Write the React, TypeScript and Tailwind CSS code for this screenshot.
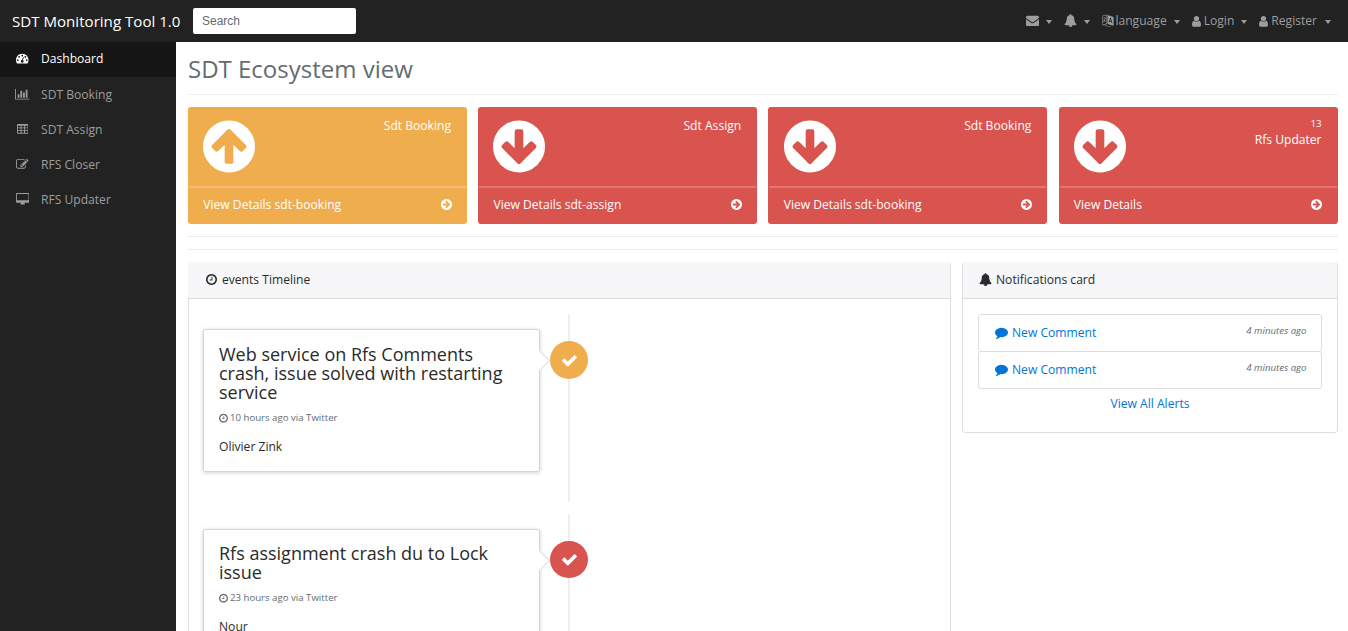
import React from "react";

const ICONS = {
  envelope: { w: 1792, d: "M1792 710v794q0 66-47 113t-113 47h-1472q-66 0-113-47t-47-113v-794q44 49 101 87 362 246 497 345 57 42 92.5 65.5t94.5 48 110 24.5h2q51 0 110-24.5t94.5-48 92.5-65.5q170-123 498-345 57-39 100-87zm0-294q0 79-49 151t-122 123q-376 261-468 325-10 7-42.5 31t-54 38.5-52 32.5-57.5 27-50 9h-2q-23 0-50-9t-57.5-27-52-32.5-54-38.5-42.5-31q-91-64-262-182.5t-205-142.5q-62-42-117-115.5t-55-136.5q0-78 41.5-130t118.5-52h1472q65 0 112.5 47t47.5 113z" },
  bell: { w: 1792, d: "M912 1696q0-16-16-16-59 0-101.5-42.5t-42.5-101.5q0-16-16-16t-16 16q0 73 51.5 124.5t124.5 51.5q16 0 16-16zm816-288q0 52-38 90t-90 38h-448q0 106-75 181t-181 75-181-75-75-181h-448q-52 0-90-38t-38-90q50-42 91-88t85-119.5 74.5-158.5 50-206 19.5-260q0-152 117-282.5t307-158.5q-8-19-8-39 0-40 28-68t68-28 68 28 28 68q0 20-8 39 190 28 307 158.5t117 282.5q0 139 19.5 260t50 206 74.5 158.5 85 119.5 91 88z" },
  user: { w: 1280, x: 256, d: "M1536 1399q0 109-62.5 187t-150.5 78h-854q-88 0-150.5-78t-62.5-187q0-85 8.5-160.5t31.5-152 58.5-131 94-89 134.5-34.5q131 128 313 128t313-128q76 0 134.5 34.5t94 89 58.5 131 31.5 152 8.5 160.5zm-256-887q0 159-112.5 271.5t-271.5 112.5-271.5-112.5-112.5-271.5 112.5-271.5 271.5-112.5 271.5 112.5 112.5 271.5z" },
  gauge: { w: 1792, d: "M384 1152q0-53-37.5-90.5t-90.5-37.5-90.5 37.5-37.5 90.5 37.5 90.5 90.5 37.5 90.5-37.5 37.5-90.5zm192-448q0-53-37.5-90.5t-90.5-37.5-90.5 37.5-37.5 90.5 37.5 90.5 90.5 37.5 90.5-37.5 37.5-90.5zm428 481l101-382q6-26-7.5-48.5t-38.5-29.5-48 6.5-30 39.5l-101 382q-60 5-107 43.5t-63 98.5q-20 77 20 146t117 89 146-20 89-117q16-60-6-117t-72-91zm660-33q0-53-37.5-90.5t-90.5-37.5-90.5 37.5-37.5 90.5 37.5 90.5 90.5 37.5 90.5-37.5 37.5-90.5zm-640-640q0-53-37.5-90.5t-90.5-37.5-90.5 37.5-37.5 90.5 37.5 90.5 90.5 37.5 90.5-37.5 37.5-90.5zm448 192q0-53-37.5-90.5t-90.5-37.5-90.5 37.5-37.5 90.5 37.5 90.5 90.5 37.5 90.5-37.5 37.5-90.5zm320 448q0 261-141 483-19 29-54 29h-1402q-35 0-54-29-141-221-141-483 0-182 71-348t191-286 286-191 348-71 348 71 286 191 191 286 71 348z" },
  chart: { w: 2048, d: "M640 896v512h-256v-512h256zm384-512v1024h-256v-1024h256zm1024 1152v128h-2048v-1536h128v1408h1920zm-640-896v768h-256v-768h256zm384-384v1152h-256v-1152h256z" },
  table: { w: 1664, x: 64, d: "M224 128h1344q66 0 113 47t47 113v1088q0 66-47 113t-113 47h-1344q-66 0-113-47t-47-113v-1088q0-66 47-113t113-47zM192 416v192q0 32 32 32h320q32 0 32-32v-192q0-32-32-32h-320q-32 0-32 32zM704 416v192q0 32 32 32h320q32 0 32-32v-192q0-32-32-32h-320q-32 0-32 32zM1216 416v192q0 32 32 32h320q32 0 32-32v-192q0-32-32-32h-320q-32 0-32 32zM192 800v192q0 32 32 32h320q32 0 32-32v-192q0-32-32-32h-320q-32 0-32 32zM704 800v192q0 32 32 32h320q32 0 32-32v-192q0-32-32-32h-320q-32 0-32 32zM1216 800v192q0 32 32 32h320q32 0 32-32v-192q0-32-32-32h-320q-32 0-32 32zM192 1184v192q0 32 32 32h320q32 0 32-32v-192q0-32-32-32h-320q-32 0-32 32zM704 1184v192q0 32 32 32h320q32 0 32-32v-192q0-32-32-32h-320q-32 0-32 32zM1216 1184v192q0 32 32 32h320q32 0 32-32v-192q0-32-32-32h-320q-32 0-32 32z" },
  edit: { w: 1792, d: "M888 1184l116-116-152-152-116 116v56h96v96h56zm440-720q-16-16-33 1l-350 350q-17 17-1 33t33-1l350-350q17-17 1-33zm80 594v190q0 119-84.5 203.5t-203.5 84.5h-832q-119 0-203.5-84.5t-84.5-203.5v-832q0-119 84.5-203.5t203.5-84.5h832q63 0 117 25 15 7 18 23 3 17-9 29l-49 49q-14 14-32 8-23-6-45-6h-832q-66 0-113 47t-47 113v832q0 66 47 113t113 47h832q66 0 113-47t47-113v-126q0-13 9-22l64-64q15-15 35-7t20 29zm-96-738l288 288-672 672h-288v-288zm444 132l-92 92-288-288 92-92q28-28 68-28t68 28l152 152q28 28 28 68t-28 68z" },
  desktop: { w: 1920, d: "M1792 992v-832q0-13-9.500-22.500t-22.500-9.500h-1600q-13 0-22.500 9.500t-9.500 22.500v832q0 13 9.500 22.500t22.500 9.500h1600q13 0 22.500-9.500t9.500-22.500zm128-832v1088q0 66-47 113t-113 47h-544q0 37 16 77.500t32 71 16 43.500q0 26-19 45t-45 19h-512q-26 0-45-19t-19-45q0-14 16-44t32-70 16-78h-544q-66 0-113-47t-47-113v-1088q0-66 47-113t113-47h1600q66 0 113 47t47 113z" },
  circleUp: { w: 1536, x: 128, d: "M1412 895q0-27-18-45l-362-362-91-91q-18-18-45-18t-45 18l-91 91-362 362q-18 18-18 45t18 45l91 91q18 18 45 18t45-18l189-189v502q0 26 19 45t45 19h128q26 0 45-19t19-45v-502l189 189q19 19 45 19t45-19l91-91q18-18 18-45zm252 1q0 209-103 385.5t-279.5 279.5-385.5 103-385.5-103-279.5-279.5-103-385.5 103-385.5 279.5-279.5 385.5-103 385.5 103 279.5 279.5 103 385.5z" },
  clock: { w: 1536, x: 128, d: "M1024 544v448q0 14-9 23t-23 9h-320q-14 0-23-9t-9-23v-64q0-14 9-23t23-9h224v-352q0-14 9-23t23-9h64q14 0 23 9t9 23zm416 352q0-148-73-273t-198-198-273-73-273 73-198 198-73 273 73 273 198 198 273 73 273-73 198-198 73-273zm224 0q0 209-103 385.5t-279.5 279.5-385.5 103-385.5-103-279.5-279.5-103-385.5 103-385.5 279.5-279.5 385.5-103 385.5 103 279.5 279.5 103 385.5z" },
  check: { w: 1792, d: "M1671 566q0 40-28 68l-724 724-136 136q-28 28-68 28t-68-28l-136-136-362-362q-28-28-28-68t28-68l136-136q28-28 68-28t68 28l294 295 656-657q28-28 68-28t68 28l136 136q28 28 28 68z" },
  comment: { w: 1792, d: "M1792 896q0 174-120 321.5t-326 233-450 85.5q-70 0-145-8-198 175-460 242-49 14-114 22-17 2-30.5-9t-17.5-29v-1q-3-4-.5-12t2-10 4.5-9.5l6-9 7-8.500 8-9q7-8 31-34.500t34.500-38 31-39.500 32.500-51 27-59 26-76q-157-89-247.500-220t-90.500-281q0-174 120-321.500t326-233 450-85.500 450 85.500 326 233 120 321.500z" },
  language: { w: 1536, d: "M0 240l640-176v1300l-640 210zM80 300v1160l480-155v-1140zM290 400h70v100h140v80h-60q-20 200-110 330 60 80 140 120l-40 80q-90-50-150-130-70 80-160 130l-50-70q90-50 160-130-60-90-80-200h80q20 80 50 130 60-100 80-260h-250v-80h180zM700 140l836 270v1200l-836-246zM1060 500l-190 620 110 34 36-130 200 62 40 150 110 34-190-710zM1100 640l76 320-130-40zM400 1560l600 160 100-60-20 132-780-170z" },
};

type IconProps = { name: keyof typeof ICONS; className?: string };

function Icon({ name, className = "" }: IconProps) {
  const icon: { w: number; x?: number; d: string } = ICONS[name];
  return (
    <svg viewBox={`${icon.x ?? 0} 0 ${icon.w} 1792`} className={`inline-block shrink-0 ${className}`} fill="currentColor" fillRule="evenodd" aria-hidden="true">
      <path d={icon.d} />
    </svg>
  );
}

function Caret() {
  return <span className="mt-[2px] ml-[7px] inline-block h-0 w-0 border-x-[3px] border-t-[4px] border-x-transparent border-t-current" />;
}

const NAV: { icon: keyof typeof ICONS; label: string; active?: boolean }[] = [
  { icon: "gauge", label: "Dashboard", active: true },
  { icon: "chart", label: "SDT Booking" },
  { icon: "table", label: "SDT Assign" },
  { icon: "edit", label: "RFS Closer" },
  { icon: "desktop", label: "RFS Updater" },
];

const STATUS = [
  { title: "Sdt Booking", link: "View Details sdt-booking", up: true },
  { title: "Sdt Assign", link: "View Details sdt-assign" },
  { title: "Sdt Booking", link: "View Details sdt-booking" },
  { title: "Rfs Updater", link: "View Details", count: 13 },
];

function StatusCard({ title, link, up, count }: { title: string; link: string; up?: boolean; count?: number }) {
  return (
    <div className={`h-[117px] rounded-[3px] text-white ${up ? "bg-[#f0ad4e]" : "bg-[#d9534f]"}`}>
      <div className="flex h-[79px] justify-between pt-[9px] pr-[15px] pl-[15.3px]">
        <Icon name="circleUp" className={`h-[61px] w-[52px] ${up ? "" : "rotate-180"}`} />
        <div className="pr-px text-right leading-[20px]">
          {count !== undefined && <div className="-mb-px text-[9.7px] leading-[15px]">{count}</div>}
          <div>{title}</div>
        </div>
      </div>
      <div className="mx-px flex h-[38px] items-center justify-between border-t-2 border-white/20 px-[14.3px] pb-[2px]">
        <span>{link}</span>
        <Icon name="circleUp" className="mb-px h-[13px] w-[11px] rotate-90" />
      </div>
    </div>
  );
}

function TimelineItem({ title, time, author, danger }: { title: string; time: string; author: string; danger?: boolean }) {
  return (
    <li className="relative flex h-[188px]">
      <div className="absolute top-0 left-[365px] h-full w-[2px] bg-[#eeeeee]" />
      <div className={`relative mt-[15px] h-fit w-[337px] rounded-[2px] border border-[#d4d4d4] px-[15px] pb-[14px] shadow-[0_1px_4px_rgba(0,0,0,0.175)] ${danger ? "pt-[14px]" : "pt-[15px]"}`}>
        <div className="absolute top-[23px] -right-[8px] h-[15px] w-[15px] rotate-45 border-t border-r border-[#dcdcdc] bg-white" />
        <h4 className="text-[18px] leading-[19px] font-normal">{title}</h4>
        <p className="mt-[7px] flex h-[19px] items-center text-[9.65px] text-[#636c72]">
          <Icon name="clock" className="mr-[2px] mb-px h-[10.4px] w-[9px]" />
          {time}
        </p>
        <p className="mt-[9px] leading-[19.5px]">{author}</p>
      </div>
      <div className={`absolute top-[27px] left-[347px] flex w-[38px] items-center justify-center rounded-full text-white ${danger ? "h-[37px] bg-[#d9534f]" : "h-[38px] bg-[#f0ad4e]"}`}>
        <Icon name="check" className="h-[17px] w-[17px]" />
      </div>
    </li>
  );
}

export default function App() {
  return (
    <div className="flex h-[631px] w-[1348px] flex-col overflow-hidden bg-white font-['Open_Sans',sans-serif] text-[12.1px] text-[#292b2c]">
      <header className="flex h-[42px] shrink-0 items-center bg-[#222222] pl-[12px]">
        <span className="w-[181px] text-[15.1px] text-white">SDT Monitoring Tool 1.0</span>
        <input placeholder="Search" className="h-[26px] w-[163px] rounded-[2px] bg-white px-[9px] font-['Liberation_Sans',sans-serif] text-[12px] text-[#464a4c] placeholder:text-[#636c72]" />
        <nav className="ml-auto flex items-center pr-[17px] text-[#9d9d9d]">
          <span className="mr-[12px] flex items-center"><Icon name="envelope" className="h-[13px] w-[13px]" /><Caret /></span>
          <span className="mr-[12px] flex items-center"><Icon name="bell" className="h-[13px] w-[13px]" /><Caret /></span>
          <span className="mr-[12px] flex items-center"><Icon name="language" className="mr-px h-[13px] w-[12px]" />language<Caret /></span>
          <span className="mr-[12px] flex items-center"><Icon name="user" className="mr-[3px] h-[12.6px] w-[9px]" />Login<Caret /></span>
          <span className="flex items-center"><Icon name="user" className="mr-[3px] h-[12.6px] w-[9px]" />Register<span className="w-px" /><Caret /></span>
        </nav>
      </header>
      <div className="flex min-h-0 flex-1">
        <aside className="w-[176px] shrink-0 bg-[#222222]">
          {NAV.map((n) => (
            <div key={n.label} className={`flex h-[35px] items-center pb-px pl-[15px] ${n.active ? "mb-px bg-[#151515] text-white" : "text-[#9d9d9d]"}`}>
              <span className="mr-[11px] mb-px flex w-[15px] justify-center"><Icon name={n.icon} className="h-[12.5px]" /></span>
              {n.label}
            </div>
          ))}
        </aside>
        <main className="flex-1 pr-[10px] pl-[12px]">
          <h1 className="h-[53px] border-b border-[#eeeeee] pt-[12px] text-[24px] leading-[30px] font-normal text-[#636c72]">SDT Ecosystem view</h1>
          <section className="mt-[12px] grid grid-cols-[repeat(4,279px)] gap-[11.2px]">
            {STATUS.map((s, i) => <StatusCard key={i} {...s} />)}
          </section>
          <hr className="mt-[12px] border-[#ececec]" />
          <hr className="mt-[12px] border-[#ececec]" />
          <div className="mt-[12px] flex items-start gap-[11px]">
            <section className="h-[500px] w-[763px] rounded-[3px] border border-[#dfdfdf]">
              <h2 className="-mt-px -ml-px flex h-[37px] items-center rounded-t-[2px] border-b border-[#dcdcdc] bg-[#f7f7f9] pl-[18px]"><Icon name="clock" className="mr-[5px] mb-px h-[13px] w-[11px]" />events Timeline</h2>
              <ul className="flex flex-col gap-[12px] px-[14px] pt-[15px]">
                <TimelineItem title="Web service on Rfs Comments crash, issue solved with restarting service" time="10 hours ago via Twitter" author="Olivier Zink" />
                <TimelineItem danger title="Rfs assignment crash du to Lock issue" time="23 hours ago via Twitter" author="Nour" />
              </ul>
            </section>
            <section className="h-[171px] w-[376px] rounded-[3px] border border-[#dfdfdf]">
              <h2 className="-mt-px flex h-[37px] items-center rounded-t-[2px] border-b border-[#dcdcdc] bg-[#f7f7f9] pl-[16px]"><Icon name="bell" className="mr-[4px] mb-px h-[13px] w-[13px]" />Notifications card</h2>
              <div className="px-[15px] pt-[15px]">
                {[0, 1].map((i) => (
                  <a key={i} className={`flex h-[38px] justify-between rounded-[3px] border border-[#dddddd] pr-[14.5px] pl-[16px] text-[#0275d8] ${i ? "-mt-px" : ""}`}>
                    <span className="flex items-center"><Icon name="comment" className="mr-[4px] mb-px h-[13px] w-[13px]" />New Comment</span>
                    <em className="pt-[8px] text-[9.65px] leading-[15px] text-[#636c72]">4 minutes ago</em>
                  </a>
                ))}
                <a className="mt-[5px] block text-center leading-[20px] text-[#0275d8]">View All Alerts</a>
              </div>
            </section>
          </div>
        </main>
      </div>
    </div>
  );
}
